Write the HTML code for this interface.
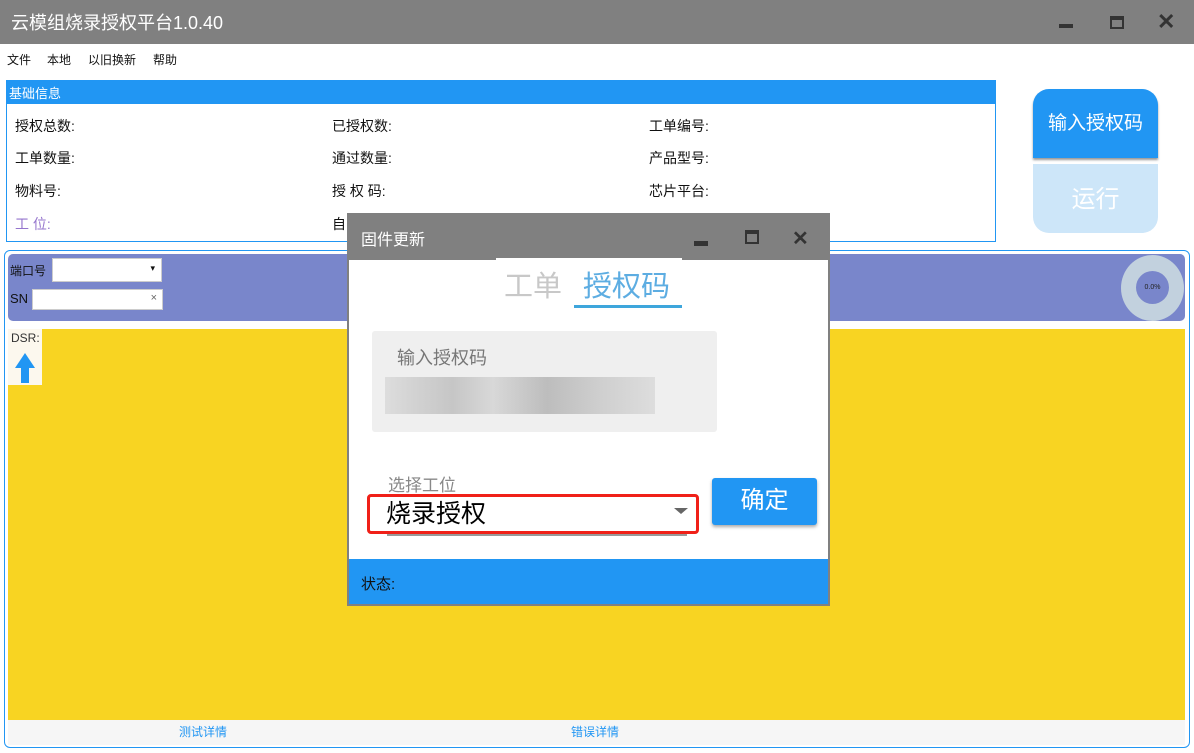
<!DOCTYPE html>
<html><head><meta charset="utf-8"><style>
*{margin:0;padding:0;box-sizing:border-box}
body{width:1194px;height:753px;position:relative;overflow:hidden;background:#fff;font-family:"Liberation Sans","Noto Sans CJK SC",sans-serif;font-size:14px;color:#111}
.a{position:absolute}
</style></head><body>
<div class="a" style="left:0;top:0;width:1194px;height:44px;background:#808080"></div>
<div class="a" style="left:11px;top:9px;font-size:18px;color:#fff">云模组烧录授权平台1.0.40</div>
<div class="a" style="left:1059px;top:24px;width:14px;height:4px;background:#333"></div>
<div class="a" style="left:1110px;top:16px;width:14px;height:13px;border:2px solid #333;border-top-width:4px"></div>
<div class="a" style="left:1157px;top:9px;font-size:22px;font-weight:bold;color:#333">✕</div>
<div class="a" style="left:7px;top:51px;font-size:12px">文件</div>
<div class="a" style="left:47px;top:51px;font-size:12px">本地</div>
<div class="a" style="left:88px;top:51px;font-size:12px">以旧换新</div>
<div class="a" style="left:153px;top:51px;font-size:12px">帮助</div>

<div class="a" style="left:6px;top:80px;width:990px;height:162px;border:1px solid #2196F3"></div>
<div class="a" style="left:6px;top:80px;width:990px;height:24px;background:#2196F3;color:#fff;font-size:13px;padding:3px 3px">基础信息</div>
<div class="a" style="left:15px;top:116px">授权总数:</div>
<div class="a" style="left:15px;top:148px">工单数量:</div>
<div class="a" style="left:15px;top:181px">物料号:</div>
<div class="a" style="left:15px;top:214px;color:#9575CD">工 位:</div>
<div class="a" style="left:332px;top:116px">已授权数:</div>
<div class="a" style="left:332px;top:148px">通过数量:</div>
<div class="a" style="left:332px;top:181px">授 权 码:</div>
<div class="a" style="left:332px;top:214px">自</div>
<div class="a" style="left:649px;top:116px">工单编号:</div>
<div class="a" style="left:649px;top:148px">产品型号:</div>
<div class="a" style="left:649px;top:181px">芯片平台:</div>

<div class="a" style="left:1033px;top:89px;width:125px;height:69px;background:#2196F3;border-radius:16px 16px 0 0;color:#fff;font-size:19px;text-align:center;line-height:70px;box-shadow:0 2px 2px #999">输入授权码</div>
<div class="a" style="left:1033px;top:164px;width:125px;height:69px;background:#CDE6F9;border-radius:0 0 16px 16px;color:#fff;font-size:24px;text-align:center;line-height:72px">运行</div>

<div class="a" style="left:4px;top:250px;width:1186px;height:498px;border:1px solid #2196F3;border-radius:6px;background:#fff"></div>
<div class="a" style="left:8px;top:254px;width:1177px;height:67px;background:#7986CB;border-radius:5px"></div>
<div class="a" style="left:10px;top:262px;font-size:12px">端口号</div>
<div class="a" style="left:52px;top:258px;width:110px;height:24px;background:#fff;border:1px solid #ccc;font-size:9px;text-align:right;padding:4px 6px">▾</div>
<div class="a" style="left:10px;top:291px;font-size:13px">SN</div>
<div class="a" style="left:32px;top:289px;width:131px;height:21px;background:#fff;border:1px solid #ccc;font-size:11px;color:#666;text-align:right;padding:2px 5px">×</div>
<div class="a" style="left:1121px;top:255px;width:63px;height:66px;border-radius:50%;background:#C2D1DE"></div>
<div class="a" style="left:1136px;top:271px;width:33px;height:33px;border-radius:50%;background:#7986CB;font-size:7px;text-align:center;line-height:33px;color:#222">0.0%</div>

<div class="a" style="left:8px;top:329px;width:1177px;height:391px;background:#F8D422"></div>
<div class="a" style="left:8px;top:329px;width:34px;height:56px;background:#FCF8EE"></div>
<div class="a" style="left:11px;top:331px;font-size:12px;color:#333">DSR:</div>
<div class="a" style="left:15px;top:353px;width:0;height:0;border-left:10px solid transparent;border-right:10px solid transparent;border-bottom:15px solid #2196F3"></div>
<div class="a" style="left:21px;top:367px;width:8px;height:16px;background:#2196F3"></div>
<div class="a" style="left:8px;top:720px;width:1177px;height:25px;background:#F6F6F6"></div>
<div class="a" style="left:179px;top:723px;font-size:12px;color:#2196F3">测试详情</div>
<div class="a" style="left:571px;top:723px;font-size:12px;color:#2196F3">错误详情</div>

<div class="a" style="left:347px;top:213px;width:483px;height:393px;background:#fff;border:2px solid #808080"></div>
<div class="a" style="left:347px;top:213px;width:483px;height:47px;background:#808080"></div>
<div class="a" style="left:361px;top:226px;font-size:16px;color:#fff">固件更新</div>
<div class="a" style="left:694px;top:241px;width:14px;height:5px;background:#333"></div>
<div class="a" style="left:745px;top:230px;width:14px;height:14px;border:2px solid #333;border-top-width:4px"></div>
<div class="a" style="left:792px;top:226px;font-size:20px;font-weight:bold;color:#333">✕</div>
<div class="a" style="left:496px;top:258px;width:186px;height:2px;background:#fff"></div>
<div class="a" style="left:504px;top:263px;font-size:29px;color:#C8C8C8">工单</div>
<div class="a" style="left:583px;top:263px;font-size:29px;color:#5DADE2">授权码</div>
<div class="a" style="left:574px;top:305px;width:108px;height:3px;background:#3EA6DC"></div>
<div class="a" style="left:372px;top:331px;width:345px;height:101px;background:#EFEFEF;border-radius:3px"></div>
<div class="a" style="left:397px;top:344px;font-size:18px;color:#777">输入授权码</div>
<div class="a" style="left:385px;top:377px;width:270px;height:37px;background:linear-gradient(90deg,#ddd 0,#d3d3d3 10%,#c6c6c6 25%,#d8d8d8 40%,#bdbdbd 60%,#cfcfcf 80%,#ddd 100%)"></div>
<div class="a" style="left:388px;top:471px;font-size:17px;color:#888">选择工位</div>
<div class="a" style="left:387px;top:534px;width:300px;height:2px;background:#999"></div>
<div class="a" style="left:367px;top:494px;width:332px;height:40px;border:3px solid #F02018;border-radius:4px"></div>
<div class="a" style="left:386px;top:494px;font-size:25px;color:#000">烧录授权</div>
<div class="a" style="left:674px;top:508px;width:0;height:0;border-left:7px solid transparent;border-right:7px solid transparent;border-top:6px solid #666"></div>
<div class="a" style="left:712px;top:478px;width:105px;height:47px;background:#2196F3;border-radius:3px;color:#fff;font-size:24px;text-align:center;line-height:46px;box-shadow:0 2px 3px #aaa">确定</div>
<div class="a" style="left:349px;top:559px;width:479px;height:45px;background:#2196F3"></div>
<div class="a" style="left:361px;top:573px;font-size:15px;color:#111">状态:</div>
</body></html>
